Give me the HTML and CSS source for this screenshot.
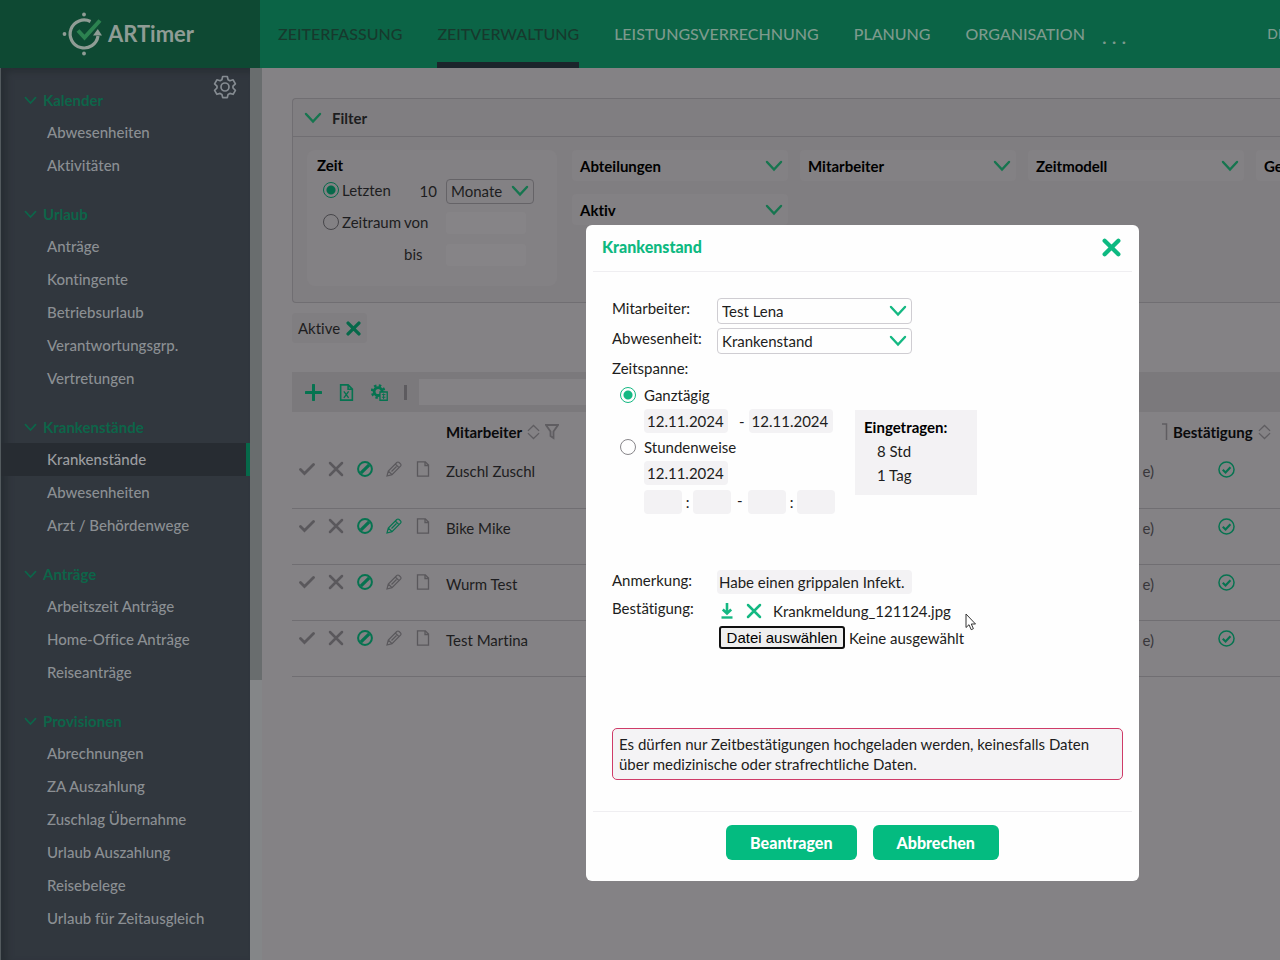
FILE: index.html
```html
<!DOCTYPE html>
<html lang="de">
<head>
<meta charset="utf-8">
<title>ARTimer – Krankenstände</title>
<link rel="stylesheet" href="styles.css">
</head>
<body>
<svg class="defs" aria-hidden="true">
  <symbol id="chev" viewBox="0 0 18 12"><path d="M2 2l7 7.500L16 2" fill="none" stroke="currentColor" stroke-width="2.400" stroke-linecap="round"/></symbol>
  <symbol id="cross" viewBox="0 0 18 18"><path d="M2.500 2.500l13 13M15.500 2.500l-13 13" fill="none" stroke="currentColor" stroke-width="4" stroke-linecap="round"/></symbol>
  <symbol id="thin-cross" viewBox="0 0 16 16"><path d="M2 2l12 12M14 2L2 14" fill="none" stroke="currentColor" stroke-width="2.500" stroke-linecap="round"/></symbol>
  <symbol id="check" viewBox="0 0 16 16"><path d="M1.500 8.500l4 4L14.500 3.500" fill="none" stroke="currentColor" stroke-width="2.800" stroke-linecap="round"/></symbol>
  <symbol id="ban" viewBox="0 0 16 16"><circle cx="8" cy="8" r="6.900" fill="none" stroke="currentColor" stroke-width="2"/><path d="M3.800 12.200l8.400-8.400" stroke="currentColor" stroke-width="3.200"/></symbol>
  <symbol id="pencil" viewBox="0 0 16 16"><path d="M1 15l1.300-5L10.800 1.500q1.200-1 2.300 0l1.400 1.400q1 1.100 0 2.300L6 13.700zM2.300 10L6 13.700M9.300 3l3.700 3.700M5.500 10.500l5-5" fill="none" stroke="currentColor" stroke-width="1.200"/></symbol>
  <symbol id="page" viewBox="0 0 16 16"><path d="M2.500.8h7.800l3.200 3.200v11.200h-11zM10 1v3.500h3.500" fill="none" stroke="currentColor" stroke-width="1.300"/></symbol>
  <symbol id="sort" viewBox="0 0 14 16"><path d="M1 6.800L7 1l6 5.800M1 9.200L7 15l6-5.800" fill="none" stroke="currentColor" stroke-width="1.400"/></symbol>
  <symbol id="ok" viewBox="0 0 16 16"><circle cx="8" cy="8" r="7.100" fill="none" stroke="currentColor" stroke-width="1.400"/><path d="M4.500 8.200l2.600 2.600 4.600-5" fill="none" stroke="currentColor" stroke-width="2"/></symbol>
</svg>

<header class="topbar">
  <a class="brand" href="#">
    <svg class="brand-mark" viewBox="0 0 42 44" aria-hidden="true">
      <path d="M28.500 9.500A14 14 0 1 0 36 24" fill="none" stroke="#8f9c95" stroke-width="3.200"/>
      <path d="M31 23.500l4.800-6.500 4.200 6.500z" fill="#8f9c95"/>
      <circle cx="22" cy="2.500" r="1.900" fill="#8f9c95"/><circle cx="2.500" cy="22" r="1.900" fill="#8f9c95"/><circle cx="22" cy="41.500" r="1.900" fill="#8f9c95"/>
      <path d="M16 18.500l6.500 7L38 8.500" fill="none" stroke="#2c8250" stroke-width="4"/>
    </svg>
    <span>ARTimer</span>
  </a>
  <nav class="mainnav">
    <a class="dark" href="#">ZEITERFASSUNG</a>
    <a class="dark current" href="#">ZEITVERWALTUNG</a>
    <a href="#">LEISTUNGSVERRECHNUNG</a>
    <a href="#">PLANUNG</a>
    <a href="#">ORGANISATION</a>
    <a class="more" href="#">. . .</a>
    <a class="lang" href="#">DE</a>
  </nav>
</header>

<div class="shell">
  <aside class="sidebar">
    <button class="gear" aria-label="Einstellungen"><svg viewBox="0 0 24 24"><path d="M9.700 1.500h4.600l.8 3.200 1.800 1 3.200-.9 2.300 4-2.400 2.300v1.900l2.400 2.300-2.300 4-3.200-.9-1.800 1-.8 3.200H9.700l-.8-3.200-1.800-1-3.200.9-2.300-4L4 13v-1.900L1.600 8.800l2.300-4 3.200.9 1.800-1z" fill="none" stroke="currentColor" stroke-width="1.700" stroke-linejoin="round"/><circle cx="12" cy="12" r="4" fill="none" stroke="currentColor" stroke-width="1.700"/></svg></button>
    <section><h2><svg><use href="#chev"/></svg>Kalender</h2><a href="#">Abwesenheiten</a><a href="#">Aktivitäten</a></section>
    <section><h2><svg><use href="#chev"/></svg>Urlaub</h2><a href="#">Anträge</a><a href="#">Kontingente</a><a href="#">Betriebsurlaub</a><a href="#">Verantwortungsgrp.</a><a href="#">Vertretungen</a></section>
    <section><h2><svg><use href="#chev"/></svg>Krankenstände</h2><a class="active" href="#">Krankenstände</a><a href="#">Abwesenheiten</a><a href="#">Arzt / Behördenwege</a></section>
    <section><h2><svg><use href="#chev"/></svg>Anträge</h2><a href="#">Arbeitszeit Anträge</a><a href="#">Home-Office Anträge</a><a href="#">Reiseanträge</a></section>
    <section><h2><svg><use href="#chev"/></svg>Provisionen</h2><a href="#">Abrechnungen</a><a href="#">ZA Auszahlung</a><a href="#">Zuschlag Übernahme</a><a href="#">Urlaub Auszahlung</a><a href="#">Reisebelege</a><a href="#">Urlaub für Zeitausgleich</a></section>
  </aside>
  <div class="track"><div class="thumb"></div></div>

  <main class="content">
    <section class="filter">
      <h3 class="filter-head"><svg class="chev"><use href="#chev"/></svg>Filter</h3>
      <div class="filter-body">
        <fieldset class="time">
          <legend>Zeit</legend>
          <div class="time-grid">
            <label><input type="radio" name="range" checked>Letzten</label>
            <input class="num" type="text" value="10" aria-label="Anzahl">
            <span class="select"><select aria-label="Einheit"><option>Monate</option></select><svg class="chev"><use href="#chev"/></svg></span>
            <label><input type="radio" name="range">Zeitraum</label>
            <label for="von">von</label><input class="date" id="von" type="text">
            <span></span><label for="bis">bis</label><input class="date" id="bis" type="text">
          </div>
        </fieldset>
        <div class="facets">
          <button>Abteilungen<svg class="chev"><use href="#chev"/></svg></button>
          <button>Mitarbeiter<svg class="chev"><use href="#chev"/></svg></button>
          <button>Zeitmodell<svg class="chev"><use href="#chev"/></svg></button>
          <button>Ge<svg class="chev"><use href="#chev"/></svg></button>
          <button>Aktiv<svg class="chev"><use href="#chev"/></svg></button>
        </div>
      </div>
    </section>

    <button class="chip">Aktive<svg><use href="#cross"/></svg></button>

    <div class="toolbar">
      <button aria-label="Neu"><svg viewBox="0 0 16 16"><path d="M8 1v14M1 8h14" stroke="currentColor" stroke-width="2.800" stroke-linecap="round"/></svg></button>
      <button aria-label="Excel"><svg viewBox="0 0 16 16"><path d="M2.500.8h7l4 4v10.400h-11zM9.500 1v4h4" fill="none" stroke="currentColor" stroke-width="1.500"/><path d="M5.500 7l4.500 6M10 7l-4.500 6" stroke="currentColor" stroke-width="1.300"/></svg></button>
      <button aria-label="Auswertung"><svg viewBox="0 0 18 18"><circle cx="7.500" cy="8" r="4.200" fill="none" stroke="currentColor" stroke-width="3"/><circle cx="7.500" cy="8" r="6.500" fill="none" stroke="currentColor" stroke-width="2.500" stroke-dasharray="2.600 2.500"/><path d="M9.500 8.500h7.700v8.700H9.500z" fill="#7b797c" stroke="currentColor" stroke-width="1.400"/><path d="M11.500 11.200h3.800M11.500 14h3.800M13.300 10v6" stroke="currentColor"/></svg></button>
      <i></i>
      <input type="text" aria-label="Suche">
    </div>

    <table class="list">
      <thead><tr>
        <th class="actions"></th>
        <th><span class="th">Mitarbeiter<svg class="sort"><use href="#sort"/></svg><svg class="funnel" viewBox="0 0 14 16"><path d="M1 1h12L8.500 7.500V14L5.500 12V7.500z" fill="none" stroke="currentColor" stroke-width="1.800"/></svg></span></th>
        <th class="kind"></th>
        <th class="conf"><span class="th"><svg class="edge" viewBox="0 0 6 18"><path d="M0 1h4.500v16" fill="none" stroke="currentColor" stroke-width="1.500"/></svg>Bestätigung<svg class="sort"><use href="#sort"/></svg></span></th>
      </tr></thead>
      <tbody>
        <tr><td><span class="acts"><svg><use href="#check"/></svg><svg><use href="#thin-cross"/></svg><svg class="green"><use href="#ban"/></svg><svg><use href="#pencil"/></svg><svg><use href="#page"/></svg></span></td><td>Zuschl Zuschl</td><td class="kind">e)</td><td class="conf"><svg><use href="#ok"/></svg></td></tr>
        <tr><td><span class="acts"><svg><use href="#check"/></svg><svg><use href="#thin-cross"/></svg><svg class="green"><use href="#ban"/></svg><svg class="green"><use href="#pencil"/></svg><svg><use href="#page"/></svg></span></td><td>Bike Mike</td><td class="kind">e)</td><td class="conf"><svg><use href="#ok"/></svg></td></tr>
        <tr><td><span class="acts"><svg><use href="#check"/></svg><svg><use href="#thin-cross"/></svg><svg class="green"><use href="#ban"/></svg><svg><use href="#pencil"/></svg><svg><use href="#page"/></svg></span></td><td>Wurm Test</td><td class="kind">e)</td><td class="conf"><svg><use href="#ok"/></svg></td></tr>
        <tr><td><span class="acts"><svg><use href="#check"/></svg><svg><use href="#thin-cross"/></svg><svg class="green"><use href="#ban"/></svg><svg><use href="#pencil"/></svg><svg><use href="#page"/></svg></span></td><td>Test Martina</td><td class="kind">e)</td><td class="conf"><svg><use href="#ok"/></svg></td></tr>
      </tbody>
    </table>
  </main>
</div>

<div class="dialog" role="dialog" aria-labelledby="dlg-title">
  <div class="dlg-head"><h1 id="dlg-title">Krankenstand</h1><button aria-label="Schließen"><svg><use href="#cross"/></svg></button></div>
  <form class="dlg-body">
    <div class="row"><label for="ma">Mitarbeiter:</label><span class="select"><select id="ma"><option>Test Lena</option></select><svg class="chev"><use href="#chev"/></svg></span></div>
    <div class="row"><label for="ab">Abwesenheit:</label><span class="select"><select id="ab"><option>Krankenstand</option></select><svg class="chev"><use href="#chev"/></svg></span></div>
    <div class="row span-title"><span>Zeitspanne:</span></div>
    <div class="timespan">
      <div class="modes">
        <label><input type="radio" name="mode" checked>Ganztägig</label>
        <div class="line"><input class="day" type="text" value="12.11.2024" aria-label="Von"><span>-</span><input class="day" type="text" value="12.11.2024" aria-label="Bis"></div>
        <label><input type="radio" name="mode">Stundenweise</label>
        <div class="line"><input class="day" type="text" value="12.11.2024" aria-label="Tag"></div>
        <div class="line clock"><input type="text" aria-label="Von Stunde"><span>:</span><input type="text" aria-label="Von Minute"><span class="dash">-</span><input type="text" aria-label="Bis Stunde"><span>:</span><input type="text" aria-label="Bis Minute"></div>
      </div>
      <div class="summary"><b>Eingetragen:</b><span>8 Std</span><span>1 Tag</span></div>
    </div>
    <div class="row"><label for="note">Anmerkung:</label><input class="note" id="note" type="text" value="Habe einen grippalen Infekt."></div>
    <div class="row proof"><span>Bestätigung:</span>
      <div class="files">
        <div class="file">
          <button type="button" aria-label="Herunterladen"><svg viewBox="0 0 16 16"><path d="M8 0v10M3.800 6.500L8 10.500l4.200-4" fill="none" stroke="currentColor" stroke-width="2.600"/><path d="M2.500 14.500h11" stroke="currentColor" stroke-width="2.400"/></svg></button>
          <button type="button" aria-label="Löschen"><svg><use href="#thin-cross"/></svg></button>
          <span>Krankmeldung_121124.jpg</span>
        </div>
        <div class="upload"><button type="button">Datei auswählen</button><span>Keine ausgewählt</span></div>
      </div>
    </div>
    <p class="warning">Es dürfen nur Zeitbestätigungen hochgeladen werden, keinesfalls Daten über medizinische oder strafrechtliche Daten.</p>
  </form>
  <div class="dlg-foot"><button>Beantragen</button><button>Abbrechen</button></div>
</div>
<svg class="cursor" viewBox="0 0 12 18" aria-hidden="true"><path d="M1 1v13.500l3-2.800 2.200 5 2.200-1-2.100-4.700h4.200z" fill="#fff" stroke="#333" stroke-width="1"/></svg>
</body>
</html>
```

FILE: styles.css
```css
* { box-sizing: border-box; }
body {
  margin: 0;
  height: 100vh;
  overflow: hidden;
  display: flex;
  flex-direction: column;
  background: #848285;
  color: #1d1d20;
  font: 15px/20px Lato, "Open Sans", sans-serif;
  font-variant-ligatures: none;
}
a { color: inherit; text-decoration: none; }
button, input, select { font: inherit; color: inherit; border: 0; background: none; padding: 0; margin: 0; min-width: 0; }
h1, h2, h3, p { margin: 0; }
.defs { position: absolute; width: 0; height: 0; }
svg { flex: none; width: 16px; height: 16px; }
svg.chev { width: 18px; height: 12px; color: #16754f; }

input[type="radio"] {
  appearance: none;
  flex: none;
  width: 16px;
  height: 16px;
  border: 1px solid #47464a;
  border-radius: 50%;
}
input[type="radio"]:checked {
  border-color: currentColor;
  color: #06694a;
  background: radial-gradient(circle, currentColor 4px, transparent 5px);
}

/* Top bar */
.topbar { flex: none; height: 68px; display: flex; background: #0b6446; }
.brand {
  flex: none;
  width: 260px;
  display: flex;
  align-items: center;
  gap: 4px;
  padding-left: 62px;
  background: #0e4933;
  color: #8f9c95;
  font-size: 22px;
  font-weight: 700;
}
.brand-mark { width: 42px; height: 44px; }
.mainnav { flex: 1; display: flex; gap: 35px; padding-left: 18px; font-size: 16px; color: #7d9a8d; font-weight: 500; white-space: nowrap; overflow: hidden; }
.mainnav a { display: flex; align-items: center; flex: none; border: solid transparent; border-width: 6px 0; }
.mainnav .dark { color: #17392d; }
.mainnav .current { border-bottom-color: #1b242b; }
.mainnav .more { font-size: 20px; margin-left: -18px; padding-top: 4px; }
.mainnav .lang { font-size: 14px; margin-left: auto; margin-right: -6px; }

/* Sidebar */
.shell { flex: 1; display: flex; min-height: 0; }
.sidebar {
  position: relative;
  flex: none;
  width: 250px;
  padding-top: 16px;
  background: #31373e;
  border-left: 1px solid #535a5e;
  box-shadow: inset 6px 4px 6px #282e34;
  color: #8b8f93;
}
.gear { position: absolute; top: 7px; right: 13px; color: #858b91; }
.gear svg { display: block; width: 24px; height: 24px; }
.sidebar section { margin-bottom: 16px; }
.sidebar h2 { display: flex; align-items: center; gap: 6px; height: 32px; padding-left: 23px; color: #0d6549; font-size: 15px; font-weight: 700; }
.sidebar h2 svg { width: 13px; height: 9px; }
.sidebar section a { display: flex; align-items: center; height: 33px; padding: 0 0 2px 46px; font-weight: 500; }
.sidebar .active { background: #272c32; border-right: 4px solid #06694a; color: #9b9da0; }
.track { flex: none; width: 12px; background: #848688; }
.thumb { height: 612px; background: #696d6e; }

/* Content */
.content { flex: 1; min-width: 0; padding: 30px 0 0 30px; }
.filter { height: 205px; border: 1px solid #706e72; border-right: 0; border-radius: 4px 0 0 4px; background: #807e81; }
.filter-head { display: flex; align-items: center; gap: 10px; height: 38px; padding: 1px 0 0 11px; border-bottom: 1px solid #706e72; font-size: 15px; }
.filter-body { display: flex; gap: 15px; padding: 13px 0 0 14px; overflow: hidden; }
.time { flex: none; width: 250px; height: 136px; margin: 0; padding: 5px 10px 0; border: 0; border-radius: 8px; background: #838184; }
.time legend { float: left; width: 100%; padding: 0; font-weight: 700; color: #000; }
.time-grid { clear: both; display: grid; grid-template-columns: 78px 33px 88px; column-gap: 9px; grid-auto-rows: 32px; align-items: center; }
.time-grid label { display: flex; align-items: center; gap: 3px; padding: 0 0 2px 6px; }
.time-grid label[for] { padding-left: 0; }
.time-grid .num { text-align: right; }
.time-grid .date { width: 80px; height: 22px; border-radius: 3px; background: #868487; }
.select { display: grid; grid-template-columns: 1fr auto; align-items: center; }
.select select { grid-area: 1 / 1 / 2 / 3; width: 100%; height: 25px; appearance: none; border: 1px solid #656367; border-radius: 4px; padding: 0 4px; }
.select svg { grid-area: 1 / 2 / 2 / 3; margin-right: 5px; pointer-events: none; }
.facets { flex: none; display: grid; grid-template-columns: repeat(4, 216px); grid-auto-rows: 31px; gap: 13px 12px; }
.facets button { display: flex; align-items: center; justify-content: space-between; padding: 0 5px 0 8px; border-radius: 4px; background: #838184; font-weight: 700; color: #000; }

.chip { display: flex; align-items: center; gap: 6px; height: 30px; margin-top: 10px; padding: 0 6px; border-radius: 4px; background: #807e81; }
.chip svg { width: 15px; height: 15px; color: #06694a; }

.toolbar { display: flex; align-items: center; gap: 16px; height: 40px; margin-top: 29px; padding-left: 13px; background: #7b797c; color: #067350; }
.toolbar button { display: flex; }
.toolbar button svg { width: 17px; height: 17px; }
.toolbar i { width: 3px; height: 15px; background: #5d5b5f; }
.toolbar input { flex: 0 1 600px; height: 26px; margin-left: -4px; background: #848285; }

.list { width: 100%; border-collapse: collapse; table-layout: fixed; }
.list th, .list td { padding: 0; text-align: left; }
.list thead tr { height: 40px; }
.list th { color: #0a0a0c; }
.th { display: flex; align-items: center; gap: 5px; }
.th svg { color: #5f5d61; }
.th .sort { width: 13px; }
.th .funnel { width: 14px; }
.th .edge { width: 6px; height: 18px; }
.list tbody tr { height: 56px; border-bottom: 1px solid #706e72; }
.list tbody td { vertical-align: top; padding-top: 9px; }
.list .actions { width: 154px; }
.list .kind { width: 270px; text-align: right; padding-right: 8px; color: #38363a; }
.list .conf { width: 118px; }
.list td.conf { padding-left: 56px; color: #067350; }
.list td svg { display: block; }
.acts { display: flex; gap: 13px; padding-left: 7px; color: #5a585c; }
.list .green { color: #067350; }
.list td.conf svg { width: 17px; height: 17px; }

/* Dialog */
.dialog { position: absolute; left: 586px; top: 225px; width: 553px; padding: 0 7px; border-radius: 6px; background: #fefefe; }
.dlg-head { display: flex; align-items: center; justify-content: space-between; height: 47px; padding: 0 11px 2px 9px; border-bottom: 1px solid #efeef1; color: #0db981; }
.dlg-head h1 { font-size: 16px; font-weight: 900; }
.dlg-head button { display: flex; }
.dlg-head svg { width: 19px; height: 19px; }
.dlg-body { padding: 24px 9px 31px 19px; }
.dlg-body svg { color: #14b882; }
.row { display: flex; align-items: flex-start; height: 30px; padding-top: 2px; }
.row > :first-child { width: 105px; flex: none; }
.dlg-body .select { width: 195px; }
.dlg-body .select select { height: 26px; border-color: #cfcdd2; }
.span-title { height: 26px; }
.timespan { display: flex; justify-content: space-between; padding: 0 146px 50px 8px; }
.modes label { display: flex; align-items: center; gap: 8px; height: 26px; }
.modes input[type="radio"] { border-color: #88868a; }
.modes input[type="radio"]:checked { color: #14b882; border-color: #14b882; }
.line { display: flex; align-items: center; gap: 10px; height: 26px; padding-left: 24px; }
.line input, .note { height: 24px; border-radius: 4px; background: #f3f2f4; }
.line .day { width: 84px; padding: 0 3px; }
.line .day + span { margin: 0 -6px 0 1px; }
.clock { gap: 3px; height: 32px; }
.clock input { width: 38px; }
.clock span { width: 5px; text-align: center; }
.clock .dash { margin: 0 3px 4px; }
.summary { width: 122px; height: 85px; margin-top: 28px; padding: 6px 9px; display: flex; flex-direction: column; gap: 2px; background: #f3f2f4; line-height: 22px; }
.summary b { color: #000; }
.summary span { padding-left: 13px; }
.note { width: 195px; padding: 0 2px; }
.proof { height: 130px; padding-top: 0; }
.files { display: flex; flex-direction: column; gap: 5px; padding-top: 3px; }
.file { display: flex; align-items: center; gap: 11px; height: 20px; padding-left: 2px; }
.file button { display: flex; }
.upload { display: flex; align-items: center; gap: 4px; padding-left: 2px; }
.upload button { width: 126px; height: 23px; border: 2px solid #101010; border-radius: 3px; background: #efefef; color: #000; font: 15px "Liberation Sans", Arial, sans-serif; }
.warning { padding: 5px 6px; border: 1px solid #cf3b68; border-radius: 5px; background: #f4f3f5; }
.dlg-foot { display: flex; justify-content: center; gap: 16px; padding: 13px 0 21px; border-top: 1px solid #efeef1; }
.dlg-foot button { height: 35px; padding: 0 24px; border-radius: 6px; background: #04bb80; color: #fff; font-size: 16px; font-weight: 900; }
.cursor { position: absolute; left: 965px; top: 613px; width: 12px; height: 18px; }
```
